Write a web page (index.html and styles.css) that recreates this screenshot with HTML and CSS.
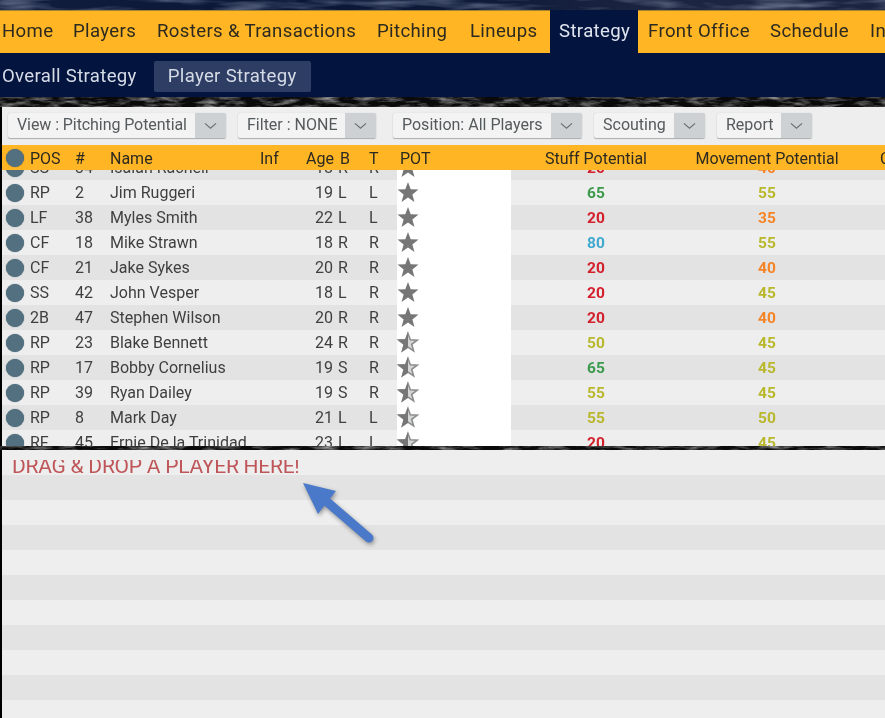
FILE: index.html
```
<!DOCTYPE html>
<html lang="en">
<head>
<meta charset="utf-8">
<title>Player Strategy</title>
<link rel="stylesheet" href="styles.css">
</head>
<body>
<svg class="defs" width="0" height="0" aria-hidden="true">
  <defs>
    <filter id="grain" x="0" y="0" width="100%" height="100%">
      <feTurbulence type="fractalNoise" baseFrequency=".05 .22" numOctaves="4" seed="7"/>
      <feColorMatrix values="0 0 0 0 .5 0 0 0 0 .5 0 0 0 0 .5 1.7 0 0 0 -.72"/>
    </filter>
    <filter id="streak" x="0" y="0" width="100%" height="100%">
      <feTurbulence type="fractalNoise" baseFrequency=".015 .1" numOctaves="3" seed="11"/>
      <feColorMatrix values="0 0 0 0 .5 0 0 0 0 .58 0 0 0 0 .75 1.2 0 0 0 -.55"/>
    </filter>
    <symbol id="star" viewBox="0 0 24 24">
      <path class="star-full" d="M12 1L14.7 8.28L22.46 8.6L16.37 13.42L18.47 20.9L12 16.6L5.53 20.9L7.63 13.42L1.54 8.6L9.3 8.28Z"/>
    </symbol>
    <symbol id="half" viewBox="0 0 24 24">
      <path class="star-empty" d="M12 2.4L14.3 8.8L21.2 9.1L15.7 13.3L17.6 19.9L12 16.1L6.4 19.9L8.3 13.3L2.8 9.1L9.7 8.8Z"/>
      <path class="star-full" d="M12 1L9.3 8.28L1.54 8.6L7.63 13.42L5.53 20.9L12 16.6Z"/>
    </symbol>
    <symbol id="chev" viewBox="0 0 14 8">
      <path class="chev-line" d="M1 1.2L7 6.4L13 1.2"/>
    </symbol>
  </defs>
</svg>
<div class="app">
  <div class="top-band"><svg class="tex" width="885" height="10"><rect width="885" height="10" filter="url(#streak)"/></svg></div>
  <nav class="nav">
    <a class="nav-item">Home</a>
    <a class="nav-item">Players</a>
    <a class="nav-item">Rosters &amp; Transactions</a>
    <a class="nav-item">Pitching</a>
    <a class="nav-item">Lineups</a>
    <a class="nav-item nav-active">Strategy</a>
    <a class="nav-item">Front Office</a>
    <a class="nav-item">Schedule</a>
    <a class="nav-item">Info</a>
  </nav>
  <div class="subnav">
    <a class="sub-item">Overall Strategy</a>
    <a class="sub-item sub-active">Player Strategy</a>
  </div>
  <div class="grain-band"><svg class="tex" width="885" height="10"><rect width="885" height="10" filter="url(#grain)"/></svg></div>
  <main class="panel">
    <div class="toolbar">
      <div class="dd dd-view"><span class="dd-label">View : Pitching Potential</span><span class="dd-arrow"><svg class="chev"><use href="#chev"/></svg></span></div>
      <div class="dd dd-filter"><span class="dd-label">Filter : NONE</span><span class="dd-arrow"><svg class="chev"><use href="#chev"/></svg></span></div>
      <div class="dd dd-pos"><span class="dd-label">Position: All Players</span><span class="dd-arrow"><svg class="chev"><use href="#chev"/></svg></span></div>
      <div class="dd dd-scout"><span class="dd-label">Scouting</span><span class="dd-arrow"><svg class="chev"><use href="#chev"/></svg></span></div>
      <div class="dd dd-report"><span class="dd-label">Report</span><span class="dd-arrow"><svg class="chev"><use href="#chev"/></svg></span></div>
    </div>
    <div class="row head">
      <span class="dot"></span><span>POS</span><span>#</span><span>Name</span><span>Inf</span><span class="age-h">Age</span><span class="b-h">B</span><span>T</span><span class="pot-h">POT</span><span class="num-h">Stuff Potential</span><span class="num-h">Movement Potential</span><span class="c-h">C</span>
    </div>
    <div class="list">
      <div class="scroll">
        <div class="row"><span class="dot"></span><span>SS</span><span>34</span><span>Isaiah Rachell</span><span></span><span class="age">18</span><span class="b">R</span><span>R</span><span class="pot"><svg class="star"><use href="#star"/></svg></span><span class="v red">20</span><span class="v orange">40</span></div>
        <div class="row"><span class="dot"></span><span>RP</span><span>2</span><span>Jim Ruggeri</span><span></span><span class="age">19</span><span class="b">L</span><span>L</span><span class="pot"><svg class="star"><use href="#star"/></svg></span><span class="v green">65</span><span class="v yellow">55</span></div>
        <div class="row"><span class="dot"></span><span>LF</span><span>38</span><span>Myles Smith</span><span></span><span class="age">22</span><span class="b">L</span><span>L</span><span class="pot"><svg class="star"><use href="#star"/></svg></span><span class="v red">20</span><span class="v orange">35</span></div>
        <div class="row"><span class="dot"></span><span>CF</span><span>18</span><span>Mike Strawn</span><span></span><span class="age">18</span><span class="b">R</span><span>R</span><span class="pot"><svg class="star"><use href="#star"/></svg></span><span class="v blue">80</span><span class="v yellow">55</span></div>
        <div class="row"><span class="dot"></span><span>CF</span><span>21</span><span>Jake Sykes</span><span></span><span class="age">20</span><span class="b">R</span><span>R</span><span class="pot"><svg class="star"><use href="#star"/></svg></span><span class="v red">20</span><span class="v orange">40</span></div>
        <div class="row"><span class="dot"></span><span>SS</span><span>42</span><span>John Vesper</span><span></span><span class="age">18</span><span class="b">L</span><span>R</span><span class="pot"><svg class="star"><use href="#star"/></svg></span><span class="v red">20</span><span class="v yellow">45</span></div>
        <div class="row"><span class="dot"></span><span>2B</span><span>47</span><span>Stephen Wilson</span><span></span><span class="age">20</span><span class="b">R</span><span>R</span><span class="pot"><svg class="star"><use href="#star"/></svg></span><span class="v red">20</span><span class="v orange">40</span></div>
        <div class="row"><span class="dot"></span><span>RP</span><span>23</span><span>Blake Bennett</span><span></span><span class="age">24</span><span class="b">R</span><span>R</span><span class="pot"><svg class="star"><use href="#half"/></svg></span><span class="v yellow">50</span><span class="v yellow">45</span></div>
        <div class="row"><span class="dot"></span><span>RP</span><span>17</span><span>Bobby Cornelius</span><span></span><span class="age">19</span><span class="b">S</span><span>R</span><span class="pot"><svg class="star"><use href="#half"/></svg></span><span class="v green">65</span><span class="v yellow">45</span></div>
        <div class="row"><span class="dot"></span><span>RP</span><span>39</span><span>Ryan Dailey</span><span></span><span class="age">19</span><span class="b">S</span><span>R</span><span class="pot"><svg class="star"><use href="#half"/></svg></span><span class="v yellow">55</span><span class="v yellow">45</span></div>
        <div class="row"><span class="dot"></span><span>RP</span><span>8</span><span>Mark Day</span><span></span><span class="age">21</span><span class="b">L</span><span>L</span><span class="pot"><svg class="star"><use href="#half"/></svg></span><span class="v yellow">55</span><span class="v yellow">50</span></div>
        <div class="row"><span class="dot"></span><span>RF</span><span>45</span><span>Ernie De la Trinidad</span><span></span><span class="age">23</span><span class="b">L</span><span>L</span><span class="pot"><svg class="star"><use href="#half"/></svg></span><span class="v red">20</span><span class="v yellow">45</span></div>
      </div>
    </div>
    <div class="divider"><svg class="tex" width="885" height="4"><rect width="885" height="4" filter="url(#grain)"/></svg></div>
    <section class="drop">
      <div class="drop-row"><span class="drop-clip"><span class="drop-text">DRAG &amp; DROP A PLAYER HERE!</span></span></div>
      <div class="drop-row"></div><div class="drop-row"></div><div class="drop-row"></div><div class="drop-row"></div><div class="drop-row"></div>
      <div class="drop-row"></div><div class="drop-row"></div><div class="drop-row"></div><div class="drop-row"></div><div class="drop-row"></div>
      <svg class="arrow" width="90" height="80" viewBox="0 0 90 80">
        <g class="arrow-shape">
          <path class="arrow-shaft" d="M30 25L73 62"/>
          <path class="arrow-head" d="M7 7L40 15L22 38Z"/>
        </g>
      </svg>
    </section>
  </main>
</div>
</body>
</html>
```
FILE: styles.css
```
* { box-sizing: border-box; }
html, body { margin: 0; padding: 0; }
body {
  width: 885px;
  height: 718px;
  overflow: hidden;
  background: #000;
  font-family: Roboto, "Liberation Sans", sans-serif;
  color: #3f3f3f;
}
.defs { position: absolute; }
.app { width: 885px; height: 718px; overflow: hidden; filter: blur(.4px); }
.tex { display: block; }
.top-band {
  height: 10px;
  background: linear-gradient(90deg, #121e3e 0, #0b1737 30%, #0c1838 50%, #1c2642 75%, #1b2440 100%);
}
.nav {
  display: grid;
  grid-template-columns: 63px 84px 220px 93px 90px 88px 122px 100px 60px;
  height: 43px;
  padding-bottom: 2px;
  background: #ffb524;
  border-top: 1px solid #a9842f;
  font-size: 18.6px;
  letter-spacing: .36px;
  color: #2c2a20;
}
.nav-item {
  display: flex;
  align-items: center;
  padding: 0 0 0 10px;
  white-space: nowrap;
}
.nav-item:first-child { padding-left: 2px; }
.nav-active {
  margin: -1px 0 -2px;
  padding: 0 0 2px 9px;
  background: #03143f;
  color: #dfe4ee;
}
.subnav {
  display: flex;
  align-items: flex-start;
  gap: 16px;
  height: 44px;
  padding: 8px 0 0 2px;
  background: #03143f;
  color: #d5dbe6;
  font-size: 18.6px;
  letter-spacing: .32px;
}
.sub-item { height: 31px; line-height: 30px; }
.sub-item:first-child { margin-right: 1px; }
.sub-active {
  padding: 0 14px;
  border-radius: 2px;
  background: #2e3d64;
}
.grain-band { height: 10px; background: #0a0a0a; }
.panel { margin-left: 2px; }
.toolbar {
  display: flex;
  height: 38px;
  padding: 6px 0 0 6px;
  gap: 12px;
  background: #eeeeee;
  font-size: 16px;
  color: #555a5c;
}
.dd {
  display: flex;
  height: 25px;
  background: #f3f3f3;
  border-radius: 2px;
  box-shadow: 0 1px 1px #a9adaf, 0 0 1px #b9bcbe;
  overflow: hidden;
}
.dd-view { width: 218px; }
.dd-view .dd-label { letter-spacing: -.08px; }
.dd-filter { width: 138px; }
.dd-pos { width: 189px; margin-left: 5px; }
.dd-scout { width: 111px; }
.dd-report { width: 95px; }
.dd-label {
  flex: 1;
  padding-left: 9px;
  line-height: 24px;
  white-space: nowrap;
}
.dd-arrow {
  display: flex;
  flex: 0 0 31px;
  align-items: center;
  justify-content: center;
  background: #cdd1d4;
}
.chev { width: 13px; height: 8px; }
.chev-line { fill: none; stroke: #6a6f72; stroke-width: 1.3; }
.row {
  display: grid;
  grid-template-columns: 28px 45px 35px 150px 46px 27px 36px 28px 114px 170px 172px 40px;
  height: 25px;
  align-items: center;
  font-size: 16px;
  white-space: nowrap;
  background: #eeeeee;
}
.row:nth-child(odd) { background: #e3e3e3; }
.head {
  position: relative;
  z-index: 1;
  padding-top: 1px;
  background: #ffb524;
  color: #2c2a20;
  font-size: 16px;
}
.dot {
  width: 18px;
  height: 18px;
  margin-left: 4px;
  border-radius: 50%;
  background: #52707f;
  box-shadow: 0 0 1px #3d5664;
}
.age-h { text-align: right; }
.b-h { padding-left: 7px; }
.pot-h { padding-left: 3px; }
.num-h { text-align: center; }
.c-h { padding-left: 27px; }
.age { text-align: right; }
.b { padding-left: 5px; }
.pot {
  display: flex;
  align-items: center;
  align-self: stretch;
  background: #fff;
}
.star { width: 24px; height: 24px; margin-left: -1px; }
.star-full { fill: #767676; }
.star-empty { fill: #d4d6d6; stroke: #8c8c8c; stroke-width: 1.6; }
.v { text-align: center; font-weight: 700; font-size: 15.5px; }
.red { color: #d3202c; }
.orange { color: #f58426; }
.yellow { color: #b9b82c; }
.green { color: #3b9a4c; }
.blue { color: #40a9cf; }
.list { height: 276px; overflow: hidden; background: #eee; }
.scroll { margin-top: -15px; }
.divider { height: 4px; margin-left: -2px; background: #0a0a0a; }
.drop { position: relative; height: 268px; }
.drop-row { height: 25px; background: #eeeeee; }
.drop-row:nth-child(even) { background: #e3e3e3; }
.drop-row:first-child { display: flex; align-items: flex-start; padding: 10px 0 0 10px; }
.drop-clip { display: block; height: 14px; overflow: hidden; }
.drop-text {
  display: block;
  margin-top: -4px;
  font-size: 21px;
  line-height: 20px;
  letter-spacing: -.25px;
  color: #bf5659;
  white-space: nowrap;
}
.arrow { position: absolute; left: 294px; top: 26px; overflow: visible; }
.arrow-shape { filter: drop-shadow(1px 2px 2px rgba(40, 40, 40, .45)); }
.arrow-shaft { stroke: #4a79c9; stroke-width: 9; stroke-linecap: round; fill: none; }
.arrow-head { fill: #4a79c9; }
```
